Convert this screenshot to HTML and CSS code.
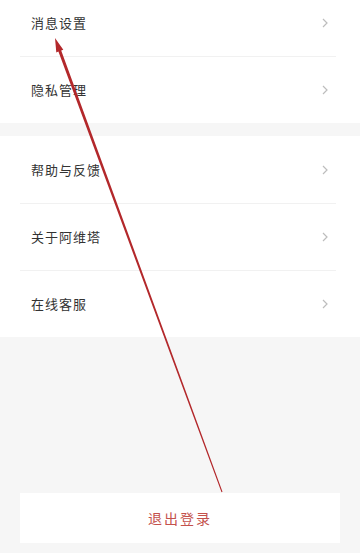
FILE: index.html
```html
<!DOCTYPE html>
<html lang="zh-CN">
<head>
<meta charset="utf-8">
<title>设置</title>
<link rel="stylesheet" href="styles.css">
</head>
<body>
<div class="page">
  <div class="group first">
    <div class="row"><span class="label">消息设置</span><svg class="chev" viewBox="0 0 6 10"><polyline points="1,1 5,5 1,9"/></svg></div>
    <div class="row"><span class="label">隐私管理</span><svg class="chev" viewBox="0 0 6 10"><polyline points="1,1 5,5 1,9"/></svg></div>
  </div>
  <div class="group">
    <div class="row"><span class="label">帮助与反馈</span><svg class="chev" viewBox="0 0 6 10"><polyline points="1,1 5,5 1,9"/></svg></div>
    <div class="row"><span class="label">关于阿维塔</span><svg class="chev" viewBox="0 0 6 10"><polyline points="1,1 5,5 1,9"/></svg></div>
    <div class="row"><span class="label">在线客服</span><svg class="chev" viewBox="0 0 6 10"><polyline points="1,1 5,5 1,9"/></svg></div>
  </div>
  <div class="logout">退出登录</div>
  <svg class="arrow" viewBox="0 0 360 553" width="360" height="553">
    <polygon points="55,38 63.3,49.8 61.2,50.6 222.5,491.8 221.5,492.2 58.4,51.6 56.3,52.4"/>
  </svg>
</div>
</body>
</html>
```
FILE: styles.css
```css
html, body {
  margin: 0;
  padding: 0;
}
body {
  background: #f6f6f6;
  font-family: "Noto Sans CJK SC", "Noto Sans", sans-serif;
  color: #333;
}
.page {
  position: relative;
  width: 360px;
  height: 553px;
  overflow: hidden;
}
.group {
  background: #fff;
}
.group.first {
  margin-top: -11px;
}
.group + .group {
  margin-top: 13px;
}
.row {
  position: relative;
  height: 67px;
  display: flex;
  align-items: center;
  justify-content: space-between;
  padding: 0 32px 0 31px;
}
.row + .row::before {
  content: "";
  position: absolute;
  top: 0;
  left: 20px;
  right: 24px;
  height: 1px;
  background: #f1f1f1;
}
.label {
  font-size: 13px;
  letter-spacing: 1px;
  color: #333;
}
.chev {
  width: 6px;
  height: 10px;
}
.chev polyline {
  fill: none;
  stroke: #bdbdbd;
  stroke-width: 1.2;
}
.logout {
  margin: 156px 20px 0;
  height: 50px;
  background: #fff;
  display: flex;
  align-items: center;
  justify-content: center;
  font-size: 14px;
  letter-spacing: 2px;
  color: #c4514c;
}
.arrow {
  position: absolute;
  left: 0;
  top: 0;
  pointer-events: none;
}
.arrow polygon {
  fill: #b3282b;
}
```
